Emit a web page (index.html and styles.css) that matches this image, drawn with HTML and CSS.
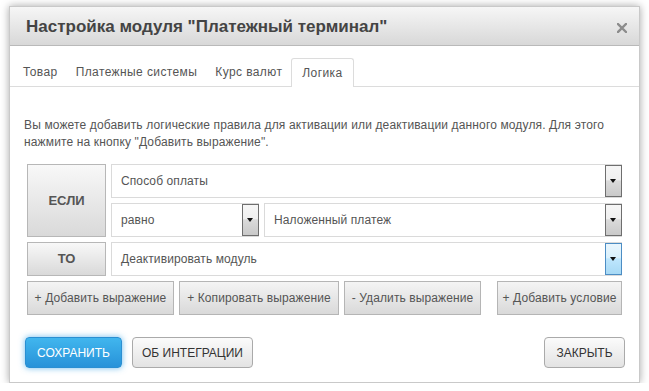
FILE: index.html
```html
<!DOCTYPE html>
<html lang="ru">
<head>
<meta charset="utf-8">
<title>Настройка модуля</title>
<link rel="stylesheet" href="styles.css">
</head>
<body>
<div class="dialog">
  <div class="header">
    <h1 class="title">Настройка модуля "Платежный терминал"</h1>
    <span class="close"><svg width="10" height="10" viewBox="0 0 10 10"><path d="M1 1L9 9M9 1L1 9" stroke="#8c8c8c" stroke-width="2.4" stroke-linecap="square"/></svg></span>
  </div>
  <ul class="tabs">
    <li class="tab">Товар</li>
    <li class="tab">Платежные системы</li>
    <li class="tab">Курс валют</li>
    <li class="tab active">Логика</li>
  </ul>
  <p class="desc">Вы можете добавить логические правила для активации или деактивации данного модуля. Для этого нажмите на кнопку "Добавить выражение".</p>
  <div class="rules">
    <div class="label label-if">ЕСЛИ</div>
    <div class="conds">
      <div class="select"><span class="val">Способ оплаты</span><span class="arrow"></span></div>
      <div class="cond-row">
        <div class="select sel-op"><span class="val">равно</span><span class="arrow"></span></div>
        <div class="select sel-grow"><span class="val">Наложенный платеж</span><span class="arrow"></span></div>
      </div>
    </div>
    <div class="label">ТО</div>
    <div class="select"><span class="val">Деактивировать модуль</span><span class="arrow arrow-focus"></span></div>
  </div>
  <div class="actions">
    <button class="btn act-1">+ Добавить выражение</button>
    <button class="btn act-2">+ Копировать выражение</button>
    <button class="btn act-3">- Удалить выражение</button>
    <button class="btn act-4">+ Добавить условие</button>
  </div>
  <div class="footer">
    <button class="fbtn primary">СОХРАНИТЬ</button>
    <button class="fbtn about">ОБ ИНТЕГРАЦИИ</button>
    <button class="fbtn close-btn">ЗАКРЫТЬ</button>
  </div>
</div>
</body>
</html>
```

FILE: styles.css
```css
* { box-sizing: border-box; }
html, body { margin: 0; padding: 0; background: #fff; }
body {
  font-family: "Liberation Sans", Arial, sans-serif;
  font-size: 12px;
  color: #555;
  padding: 6px 0 0 9px;
}
.dialog {
  width: 631px;
  height: 377px;
  border: 1px solid #c9c9c9;
  background: #fff;
  box-shadow: 0 0 8px rgba(0,0,0,0.35);
  display: flex;
  flex-direction: column;
}
.header {
  height: 39px;
  flex: none;
  background: linear-gradient(#f6f6f6, #d8d8d8);
  border-bottom: 1px solid #b9b9b9;
  display: flex;
  align-items: center;
  padding: 0 12px 0 16px;
}
.title {
  margin: 0;
  font-size: 17px;
  font-weight: bold;
  color: #444;
  flex: 1;
  padding-top: 1px;
}
.close { display: flex; padding-top: 3px; }
.tabs {
  list-style: none;
  margin: 12px 0 0 0;
  padding: 0 0 0 4px;
  display: flex;
  gap: 0;
  border-bottom: 1px solid #dcdcdc;
  height: 29px;
}
.tab {
  padding: 0 8px;
  line-height: 27px;
  height: 28px;
  color: #555;
  letter-spacing: 0.4px;
  border: 1px solid transparent;
  border-bottom: none;
  white-space: nowrap;
}
.tab.active {
  background: #fff;
  border-color: #dcdcdc;
  border-radius: 3px 3px 0 0;
  height: 29px;
  line-height: 29px;
  padding: 0 10px;
}
.desc {
  margin: 30px 14px 0 14px;
  line-height: 17px;
  letter-spacing: 0.14px;
  color: #555;
}
.rules {
  margin: 13px 17px 0 17px;
  display: grid;
  grid-template-columns: 79px 1fr;
  gap: 5px;
}
.conds { display: flex; flex-direction: column; gap: 5px; }
.cond-row { display: flex; gap: 5px; }
.label {
  background: linear-gradient(#f8f8f8, #d9d9d9);
  border: 1px solid #b7b7b7;
  display: flex;
  align-items: center;
  justify-content: center;
  font-weight: bold;
  font-size: 13px;
  color: #555;
  height: 34px;
  padding-bottom: 1px;
}
.label-if { height: auto; }
.select {
  height: 34px;
  border: 1px solid #dadada;
  display: flex;
  align-items: center;
  background: #fff;
}
.sel-op { width: 148px; flex: none; }
.sel-grow { flex: 1; }
.val { flex: 1; padding-left: 9px; color: #555; letter-spacing: 0.1px; }
.arrow {
  align-self: stretch;
  width: 17px;
  margin: 0 -1px 0 0;
  border: 1px solid #6e6e6e;
  background: linear-gradient(#f6f6f6 0%, #f0f0f0 45%, #dadada 50%, #c9c9c9 100%);
  position: relative;
}
.arrow::after {
  content: "";
  position: absolute;
  left: 4px;
  top: 13px;
  border-left: 3.5px solid transparent;
  border-right: 3.5px solid transparent;
  border-top: 4px solid #111;
}
.arrow-focus {
  border-color: #4c8dc4;
  background: linear-gradient(#eaf6fd 0%, #d9f0fc 45%, #bee6fd 50%, #a7d9f5 100%);
}
.actions {
  margin: 5px 17px 0 17px;
  display: flex;
  gap: 5px;
}
.btn {
  font-family: inherit;
  font-size: 12px;
  color: #555;
  height: 34px;
  background: linear-gradient(#f4f4f4, #d9d9d9);
  border: 1px solid #b5b5b5;
  border-radius: 0;
  padding: 0;
  margin: 0;
  white-space: nowrap;
  letter-spacing: 0.1px;
}
.act-1 { width: 147px; }
.act-2 { width: 160px; }
.act-3 { width: 137px; }
.act-4 { width: 125px; margin-left: auto; }
.footer {
  margin-top: auto;
  padding: 0 14px 14px 15px;
  display: flex;
  gap: 10px;
}
.fbtn {
  font-family: inherit;
  font-size: 12px;
  height: 31px;
  border-radius: 4px;
  margin: 0;
  padding: 0;
  color: #333;
  white-space: nowrap;
}
.primary {
  width: 97px;
  color: #fff;
  background: linear-gradient(#41b6ee, #2792d9);
  border: 1px solid #2a8fd2;
  box-shadow: 0 0 6px rgba(50,160,230,0.7);
}
.about {
  width: 121px;
  background: linear-gradient(#fbfbfb, #e3e3e3);
  border: 1px solid #aaa;
}
.close-btn {
  width: 81px;
  margin-left: auto;
  background: linear-gradient(#fbfbfb, #e3e3e3);
  border: 1px solid #aaa;
}
```
